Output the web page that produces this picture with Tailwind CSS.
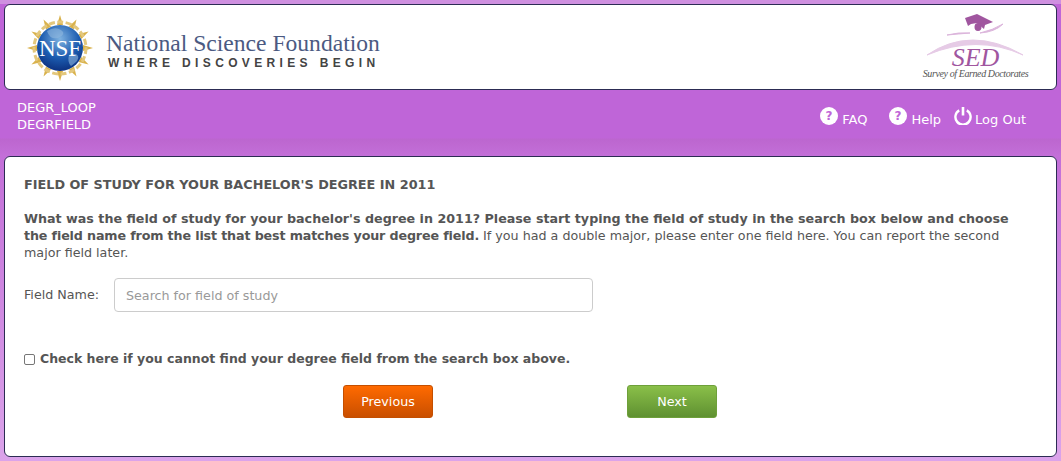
<!DOCTYPE html>
<html lang="en">
  <head>
    <meta charset="UTF-8" />
    <title>Survey of Earned Doctorates</title>
    <script src="https://cdn.jsdelivr.net/npm/@tailwindcss/browser@4"></script>
  </head>
  <body class="h-[461px] overflow-hidden bg-[linear-gradient(#bf65d8_0,#bf65d8_138px,#bc66cf_139px,#c36fd8_156px,#dba3ea_460px)] font-['DejaVu_Sans',sans-serif] text-[13px] text-[#555]">
    <div class="pt-[3px] px-1 bg-[#cf90e0] h-[4px]"></div>

    <header class="mx-1 h-[86px] flex justify-between bg-white border border-[#2c2c54] rounded-md">
      <div class="flex items-center pl-[22px] pt-px">
        <svg width="66" height="66" viewBox="0 0 66 66" class="shrink-0">
          <defs>
            <radialGradient id="globe" cx="0.5" cy="0.3" r="0.75">
              <stop offset="0" stop-color="#7fb2e0" />
              <stop offset="0.55" stop-color="#1c5cb0" />
              <stop offset="1" stop-color="#0a2a78" />
            </radialGradient>
          </defs>
          <g fill="#d9b24c">
            <path d="M33 0l3 10h-6z" />
            <path d="M33 0l3 10h-6z" transform="rotate(30 33 33)" />
            <path d="M33 0l3 10h-6z" transform="rotate(60 33 33)" />
            <path d="M33 0l3 10h-6z" transform="rotate(90 33 33)" />
            <path d="M33 0l3 10h-6z" transform="rotate(120 33 33)" />
            <path d="M33 0l3 10h-6z" transform="rotate(150 33 33)" />
            <path d="M33 0l3 10h-6z" transform="rotate(180 33 33)" />
            <path d="M33 0l3 10h-6z" transform="rotate(210 33 33)" />
            <path d="M33 0l3 10h-6z" transform="rotate(240 33 33)" />
            <path d="M33 0l3 10h-6z" transform="rotate(270 33 33)" />
            <path d="M33 0l3 10h-6z" transform="rotate(300 33 33)" />
            <path d="M33 0l3 10h-6z" transform="rotate(330 33 33)" />
          </g>
          <circle cx="33" cy="33" r="26" fill="none" stroke="#e3c77c" stroke-width="3" stroke-dasharray="6 2.5" />
          <circle cx="33" cy="33" r="23" fill="url(#globe)" />
          <path d="M20 16q8-5 14-1t-3 8q-8 2-11-7zM42 40q7-3 9 1t-7 10q-4-4-2-11z" fill="#8fb8dd" opacity="0.6" />
          <text x="33" y="41" text-anchor="middle" font-family="Liberation Serif" font-size="23" fill="#fff">NSF</text>
        </svg>
        <div class="ml-[13px] pt-[4px]">
          <div class="font-['Liberation_Serif',serif] text-[23.6px] leading-[27px] text-[#4b5a82]">National Science Foundation</div>
          <div class="ml-[2px] font-['Liberation_Sans',sans-serif] font-bold text-[12px] leading-[13px] tracking-[4.35px] whitespace-nowrap text-[#444]">WHERE DISCOVERIES BEGIN</div>
        </div>
      </div>
      <div class="flex flex-col items-center mr-[28px] pt-[8px] w-[105px]">
        <svg width="105" height="45" viewBox="0 0 105 45" class="shrink-0">
          <path d="M42 5l12-4 16 8-8 3-1 4-7-6-6 1-3 2z" fill="#a0569f" />
          <ellipse cx="55" cy="14" rx="3.5" ry="4" fill="#a0569f" />
          <path d="M24 22q12-3 23-2-12 1-23 2zM57 20q13-3 23-9-8 8-23 9z" fill="#dcb6dc" stroke="#dcb6dc" />
          <path d="M4 42q44-30 96 0-46-21-96 0z" fill="#e6cbe6" stroke="#e6cbe6" />
        </svg>
        <div class="-mt-[11px] font-['Liberation_Serif',serif] italic text-[26px] leading-[21px] text-[#a0569f]">SED</div>
        <div class="font-['Liberation_Serif',serif] italic text-[10px] leading-[11px] tracking-[-0.4px] whitespace-nowrap text-[#555]">Survey of Earned Doctorates</div>
      </div>
    </header>

    <nav class="h-[49px] pl-[17px] pr-[35px] flex justify-between text-white">
      <div class="pt-[9px] leading-[17px]">
        <div>DEGR_LOOP</div>
        <div>DEGRFIELD</div>
      </div>
      <div class="flex items-start pt-[17px]">
        <a class="flex items-start">
          <svg width="18" height="18" viewBox="0 0 18 18" class="mr-1"><circle cx="9" cy="9" r="9" fill="#fff" /><text x="9" y="13" text-anchor="middle" font-family="DejaVu Sans" font-weight="bold" font-size="12" fill="#bf65d8">?</text></svg>
          <span class="mt-[3px]">FAQ</span>
        </a>
        <a class="flex items-start ml-[22px]">
          <svg width="18" height="18" viewBox="0 0 18 18" class="mr-1"><circle cx="9" cy="9" r="9" fill="#fff" /><text x="9" y="13" text-anchor="middle" font-family="DejaVu Sans" font-weight="bold" font-size="12" fill="#bf65d8">?</text></svg>
          <span class="mt-[3px]">Help</span>
        </a>
        <a class="flex items-start ml-[13px]">
          <svg width="18" height="18" viewBox="0 0 18 18" class="mr-[3px]"><path d="M5.2 3.4a7.6 7.6 0 1 0 7.6 0" fill="none" stroke="#fff" stroke-width="2.4" /><path d="M9 0v8.5" stroke="#fff" stroke-width="2.6" /></svg>
          <span class="mt-[3px]">Log Out</span>
        </a>
      </div>
    </nav>

    <main class="mx-1 mt-[17px] h-[301px] bg-white border border-[#2c2c54] rounded-md px-[19px] pt-[19px] text-[12.7px]">
      <h1 class="font-bold leading-[17px] text-[12.8px]">FIELD OF STUDY FOR YOUR BACHELOR'S DEGREE IN 2011</h1>
      <p class="mt-[17px] w-[990px] leading-[17px]">
        <b>What was the field of study for your bachelor's degree in 2011? Please start typing the field of study in the search box below and choose <span class="tracking-[-0.14px]">the field name from the list that best matches your degree field.</span></b>
        If you had a double major, please enter one field here. You can report the second major field later.
      </p>
      <div class="mt-[17px] flex items-center">
        <label for="field" class="w-[90px]">Field Name:</label>
        <input id="field" type="text" placeholder="Search for field of study" class="w-[479px] h-[34px] px-[11px] border border-[#ccc] rounded-[4px] placeholder:text-[#999]" />
      </div>
      <label class="mt-[38px] flex items-center font-bold text-[12.5px]">
        <input type="checkbox" class="w-[11px] h-[11px] mr-[5px] appearance-none border border-[#767676] rounded-[2px] bg-white" />
        Check here if you cannot find your degree field from the search box above.
      </label>
      <div class="mt-[16px] flex pl-[319px] gap-[194px]">
        <button class="w-[90px] h-[33px] rounded-[3px] border border-[#c44f00] bg-[linear-gradient(#ff6a00,#c94f00)] text-white">Previous</button>
        <button class="w-[90px] h-[33px] rounded-[3px] border border-[#6ea03a] bg-[linear-gradient(#8abf49,#5f9131)] text-white">Next</button>
      </div>
    </main>
  </body>
</html>
